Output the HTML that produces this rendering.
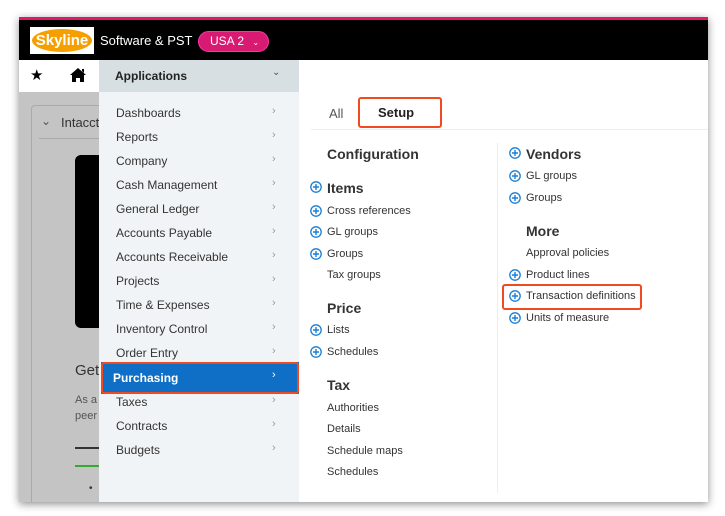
<!DOCTYPE html>
<html><head><style>
*{margin:0;padding:0;box-sizing:border-box}
body{width:725px;height:516px;background:#fff;position:relative;overflow:hidden;font-family:"Liberation Sans",Arial,sans-serif;color:#333}
.a{position:absolute}
.win{left:19px;top:17px;width:689px;height:485px;background:#c4c4c4;box-shadow:0 2px 8px rgba(0,0,0,.45);overflow:hidden}
.m{font-size:12px;color:#333;left:116px}
.ch{font-size:11px;color:#999;left:272px}
.p{font-size:11px;color:#333}
.h{font-size:14px;font-weight:bold;color:#333}
.red{border:2.5px solid #f24a20;border-radius:3px}
</style></head><body>
<svg width="0" height="0" style="position:absolute"><defs><symbol id="pl" viewBox="0 0 12 12"><circle cx="6" cy="6" r="5.2" fill="none" stroke="#1a7fd4" stroke-width="1.3"/><path d="M3 6h6M6 3v6" stroke="#1a7fd4" stroke-width="1.4"/></symbol></defs></svg>
<div class="a win">
 <div class="a" style="left:0;top:0;width:689px;height:3px;background:#e0186c"></div>
 <div class="a" style="left:0;top:3px;width:689px;height:40px;background:#000"></div>
 <div class="a" style="left:11px;top:10px;width:64px;height:27px;background:#fff"></div>
 <div class="a" style="left:13px;top:12px;width:60px;height:23px;background:#f5a000;border-radius:50%;color:#fff;font-weight:bold;font-size:15px;text-align:center;line-height:23px">Skyline</div>
 <div class="a" style="left:81px;top:16px;color:#fff;font-size:13px">Software &amp; PST</div>
 <div class="a" style="left:179px;top:14px;width:71px;height:21px;background:#d91a72;border:1px solid #f3a;border-radius:11px;color:#fff;font-size:12px;line-height:19px;padding-left:11px">USA 2 <span style="font-size:8px;margin-left:5px">&#8964;</span></div>
 <div class="a" style="left:0;top:43px;width:80px;height:32px;background:#fff"></div>
 <div class="a" style="left:11px;top:49px;font-size:15px;color:#000">★</div>
 <svg class="a" style="left:50px;top:50px" width="18" height="16" viewBox="0 0 18 16"><path d="M9 1L1 8h2v7h4v-4h4v4h4V8h2L9 1z M13 2h2v4l-2-2z" fill="#000"/></svg>
 <div class="a" style="left:12px;top:88px;width:120px;height:420px;border:1px solid #aaa;border-radius:4px"></div>
 <div class="a" style="left:22px;top:97px;font-size:12px;color:#555">&#8964;</div>
 <div class="a" style="left:42px;top:98px;font-size:13px;color:#333">Intacct</div>
 <div class="a" style="left:20px;top:121px;width:100px;height:1px;background:#aaa"></div>
 <div class="a" style="left:56px;top:138px;width:40px;height:173px;background:#000;border-radius:6px"></div>
 <div class="a" style="left:56px;top:345px;font-size:15px;color:#333">Get</div>
 <div class="a" style="left:56px;top:375px;font-size:11px;color:#555;line-height:16px">As a<br>peer</div>
 <div class="a" style="left:56px;top:422px;width:30px;height:10px;border-bottom:2px solid #333"></div>
 <div class="a" style="left:56px;top:448px;width:30px;height:2px;background:#3a3"></div>
 <div class="a" style="left:70px;top:466px;font-size:10px">•</div>
 <div class="a" style="left:80px;top:43px;width:200px;height:32px;background:#d8dfe3"></div>
 <div class="a" style="left:80px;top:75px;width:200px;height:420px;background:#f1f4f6"></div>
 <div class="a" style="left:280px;top:43px;width:409px;height:450px;background:#fff"></div>
</div>
<div class="a" style="left:115px;top:69px;font-size:12px;font-weight:bold;color:#222">Applications</div>
<div class="a" style="left:272px;top:67px;font-size:10px;color:#555">&#8964;</div>
<div class="a m" style="top:106px">Dashboards</div><div class="a ch" style="top:105px">›</div>
<div class="a m" style="top:130px">Reports</div><div class="a ch" style="top:129px">›</div>
<div class="a m" style="top:154px">Company</div><div class="a ch" style="top:153px">›</div>
<div class="a m" style="top:178px">Cash Management</div><div class="a ch" style="top:177px">›</div>
<div class="a m" style="top:202px">General Ledger</div><div class="a ch" style="top:201px">›</div>
<div class="a m" style="top:226px">Accounts Payable</div><div class="a ch" style="top:225px">›</div>
<div class="a m" style="top:250px">Accounts Receivable</div><div class="a ch" style="top:249px">›</div>
<div class="a m" style="top:274px">Projects</div><div class="a ch" style="top:273px">›</div>
<div class="a m" style="top:298px">Time &amp; Expenses</div><div class="a ch" style="top:297px">›</div>
<div class="a m" style="top:322px">Inventory Control</div><div class="a ch" style="top:321px">›</div>
<div class="a m" style="top:346px">Order Entry</div><div class="a ch" style="top:345px">›</div>
<div class="a" style="left:101px;top:362px;width:198px;height:32px;background:#0f6fc6"></div>
<div class="a red" style="left:101px;top:362px;width:198px;height:32px"></div>
<div class="a" style="left:113px;top:371px;font-size:12px;font-weight:bold;color:#fff">Purchasing</div><div class="a" style="left:272px;top:369px;font-size:11px;color:#fff">›</div>
<div class="a m" style="top:395px">Taxes</div><div class="a ch" style="top:394px">›</div>
<div class="a m" style="top:419px">Contracts</div><div class="a ch" style="top:418px">›</div>
<div class="a m" style="top:443px">Budgets</div><div class="a ch" style="top:442px">›</div>

<div class="a" style="left:329px;top:106px;font-size:13px;color:#555">All</div>
<div class="a red" style="left:358px;top:97px;width:84px;height:31px"></div>
<div class="a" style="left:378px;top:105px;font-size:13px;font-weight:bold;color:#222">Setup</div>
<div class="a" style="left:311px;top:129px;width:397px;height:1px;background:#eee"></div>
<div class="a" style="left:497px;top:143px;width:1px;height:350px;background:#eee"></div>

<div class="a h" style="left:327px;top:146px">Configuration</div>
<svg class="a" style="left:310px;top:181px" width="12" height="12"><use href="#pl"/></svg><div class="a h" style="left:327px;top:180px">Items</div>
<svg class="a" style="left:310px;top:205px" width="12" height="12"><use href="#pl"/></svg><div class="a p" style="left:327px;top:205px">Cross references</div>
<svg class="a" style="left:310px;top:226px" width="12" height="12"><use href="#pl"/></svg><div class="a p" style="left:327px;top:226px">GL groups</div>
<svg class="a" style="left:310px;top:248px" width="12" height="12"><use href="#pl"/></svg><div class="a p" style="left:327px;top:248px">Groups</div>
<div class="a p" style="left:327px;top:269px">Tax groups</div>
<div class="a h" style="left:327px;top:300px">Price</div>
<svg class="a" style="left:310px;top:324px" width="12" height="12"><use href="#pl"/></svg><div class="a p" style="left:327px;top:324px">Lists</div>
<svg class="a" style="left:310px;top:346px" width="12" height="12"><use href="#pl"/></svg><div class="a p" style="left:327px;top:346px">Schedules</div>
<div class="a h" style="left:327px;top:377px">Tax</div>
<div class="a p" style="left:327px;top:402px">Authorities</div>
<div class="a p" style="left:327px;top:423px">Details</div>
<div class="a p" style="left:327px;top:445px">Schedule maps</div>
<div class="a p" style="left:327px;top:466px">Schedules</div>

<svg class="a" style="left:509px;top:147px" width="12" height="12"><use href="#pl"/></svg><div class="a h" style="left:526px;top:146px">Vendors</div>
<svg class="a" style="left:509px;top:170px" width="12" height="12"><use href="#pl"/></svg><div class="a p" style="left:526px;top:170px">GL groups</div>
<svg class="a" style="left:509px;top:192px" width="12" height="12"><use href="#pl"/></svg><div class="a p" style="left:526px;top:192px">Groups</div>
<div class="a h" style="left:526px;top:223px">More</div>
<div class="a p" style="left:526px;top:247px">Approval policies</div>
<svg class="a" style="left:509px;top:269px" width="12" height="12"><use href="#pl"/></svg><div class="a p" style="left:526px;top:269px">Product lines</div>
<div class="a red" style="left:502px;top:284px;width:140px;height:26px"></div>
<svg class="a" style="left:509px;top:290px" width="12" height="12"><use href="#pl"/></svg><div class="a p" style="left:526px;top:290px">Transaction definitions</div>
<svg class="a" style="left:509px;top:312px" width="12" height="12"><use href="#pl"/></svg><div class="a p" style="left:526px;top:312px">Units of measure</div>
</body></html>
